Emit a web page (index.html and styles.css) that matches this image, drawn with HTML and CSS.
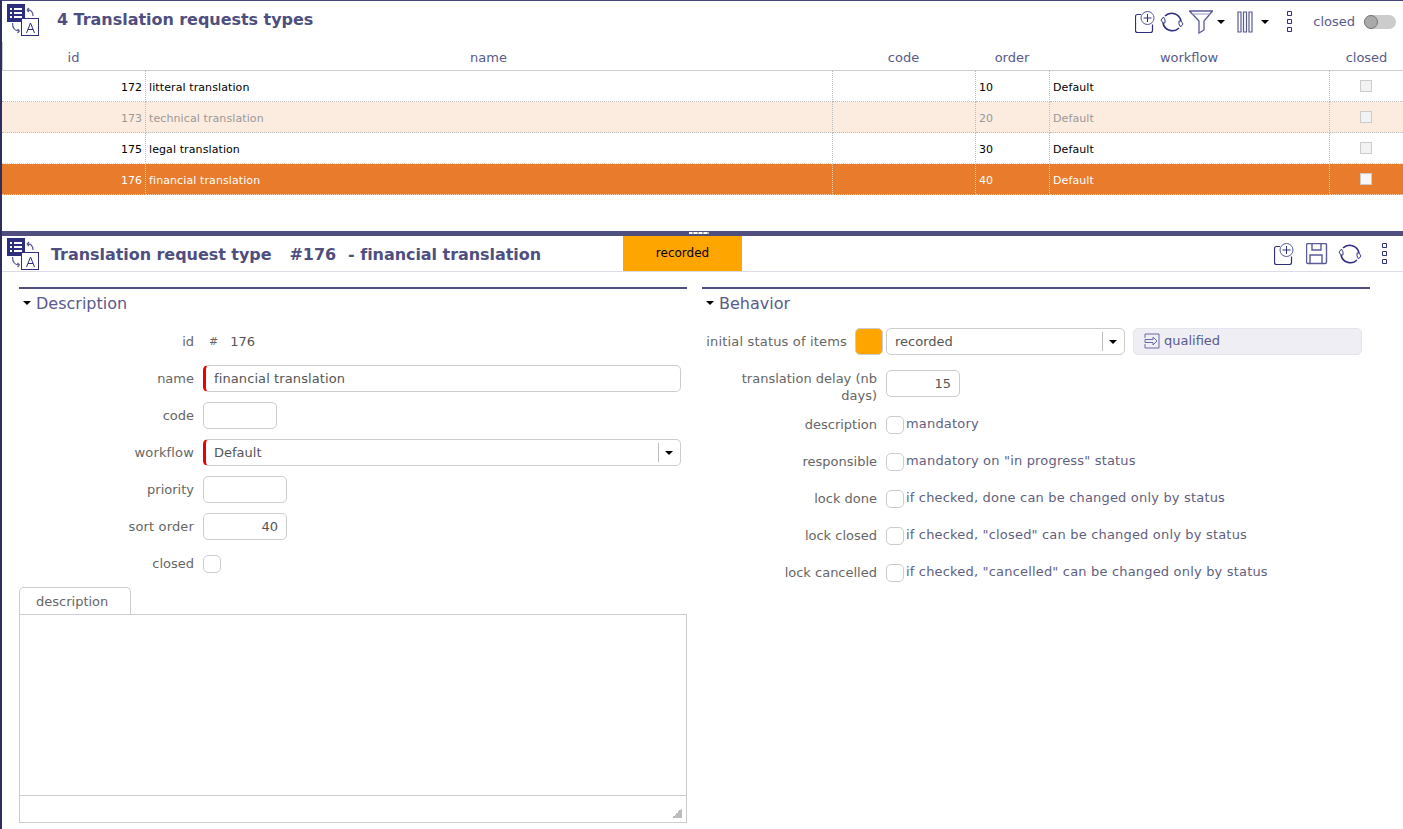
FILE: index.html
```html
<!DOCTYPE html>
<html lang="en">

<head>
  <meta charset="UTF-8" />
  <title>Translation requests types</title>
  <link rel="stylesheet" href="styles.css">
</head>

<body>
  <svg class="sprites" width="0" height="0">
    <symbol id="type-icon" viewBox="0 0 32 36">
      <rect x="0" y="0" width="18" height="18" fill="#2e2e7e" />
      <path d="M3 4h2v2h-2zM3 8h2v2h-2zM3 12h2v2h-2zM7 4h8v2h-8zM7 8h8v2h-8zM7 12h8v2h-8z" fill="#fff" />
      <rect x="14.500" y="14.500" width="17" height="17" fill="#fff" stroke="#2e2e7e" />
      <path d="M19.500 29l4-10 4 10M21 25.500h5" fill="none" stroke="#2e2e7e" />
      <path d="M20 6c3-.5 6 1 6 6M20 6l2-2M20 6l2 2M5.500 19c0 5 2 8 7 8M12.500 27l-2-2M12.500 27l-2 2" fill="none" stroke="#5a5a92" stroke-width="1.200" />
    </symbol>
    <symbol id="add-icon" viewBox="0 0 20 22">
      <path d="M6 3.500h-3.500a2 2 0 0 0-2 2v14a2 2 0 0 0 2 2h13a2 2 0 0 0 2-2v-6" fill="none" stroke="#2e2e7e" stroke-width="1.200" />
      <circle cx="12.500" cy="7" r="6.500" fill="#fff" stroke="#5a5a92" />
      <path d="M12.500 3v8M8.500 7h8" stroke="#2e2e7e" />
    </symbol>
    <symbol id="refresh-icon" viewBox="0 0 24 24">
      <path d="M5 6a9.500 9.500 0 0 1 16 5M19 18a9.500 9.500 0 0 1-16-5" fill="none" stroke="#2e2e7e" stroke-width="1.600" />
      <path d="M3 13l-2-3 2.500-3 1.500 3v3zM21 11l2 3-2.500 3-1.500-3v-3z" fill="#fff" stroke="#3a3a86" />
    </symbol>
    <symbol id="filter-icon" viewBox="0 0 24 24">
      <path d="M.500 1h23l-8.500 10v9l-5 3v-12z" fill="none" stroke="#5a5a9a" stroke-width="1.300" />
      <path d="M3 4h18" stroke="#9a9ac2" />
    </symbol>
    <symbol id="columns-icon" viewBox="0 0 16 22">
      <path d="M1 1h3v20h-3zM6.500 1h3v20h-3zM12 1h3v20h-3z" fill="none" stroke="#5a5a92" stroke-width="1.200" />
    </symbol>
    <symbol id="menu-icon" viewBox="0 0 6 21">
      <path d="M.500.500h4v4h-4zM.500 8.500h4v4h-4zM.500 16.500h4v4h-4z" fill="none" stroke="#2e2e7e" />
    </symbol>
    <symbol id="save-icon" viewBox="0 0 22 22">
      <rect x=".500" y=".500" width="20" height="20" rx="1.500" fill="none" stroke="#5a5a9a" stroke-width="1.400" />
      <path d="M6 1v6h9v-6M4 21v-9h12v9" fill="none" stroke="#5a5a9a" stroke-width="1.400" />
    </symbol>
    <symbol id="goto-icon" viewBox="0 0 16 16">
      <path d="M1 5v-4h14v14h-14v-4M1 6.500h8v-2.500l4 4-4 4v-2.500h-8z" fill="none" stroke="#6a6aa4" />
    </symbol>
  </svg>

  <div class="app">
    <!-- list part -->
    <div class="list-part">
      <div class="list-head">
        <svg class="type-icon"><use href="#type-icon" /></svg>
        <h1 class="list-title">4 Translation requests types</h1>
        <div class="tools">
          <svg class="tool tool-add"><use href="#add-icon" /></svg>
          <svg class="tool tool-refresh"><use href="#refresh-icon" /></svg>
          <svg class="tool tool-filter"><use href="#filter-icon" /></svg>
          <span class="caret caret-filter"></span>
          <svg class="tool tool-columns"><use href="#columns-icon" /></svg>
          <span class="caret caret-columns"></span>
          <svg class="tool tool-menu"><use href="#menu-icon" /></svg>
          <span class="closed-label">closed</span>
          <span class="switch"><span class="switch-knob"></span></span>
        </div>
      </div>

      <table class="grid">
        <colgroup>
          <col class="col-id" />
          <col class="col-name" />
          <col class="col-code" />
          <col class="col-order" />
          <col class="col-workflow" />
          <col class="col-closed" />
        </colgroup>
        <thead>
          <tr>
            <th>id</th>
            <th>name</th>
            <th>code</th>
            <th>order</th>
            <th>workflow</th>
            <th>closed</th>
          </tr>
        </thead>
        <tbody>
          <tr>
            <td class="num">172</td>
            <td>litteral translation</td>
            <td></td>
            <td>10</td>
            <td>Default</td>
            <td class="mid"><span class="grid-check"></span></td>
          </tr>
          <tr class="row-closed">
            <td class="num">173</td>
            <td>technical translation</td>
            <td></td>
            <td>20</td>
            <td>Default</td>
            <td class="mid"><span class="grid-check"></span></td>
          </tr>
          <tr class="row-before-selected">
            <td class="num">175</td>
            <td>legal translation</td>
            <td></td>
            <td>30</td>
            <td>Default</td>
            <td class="mid"><span class="grid-check"></span></td>
          </tr>
          <tr class="row-selected">
            <td class="num">176</td>
            <td>financial translation</td>
            <td></td>
            <td>40</td>
            <td>Default</td>
            <td class="mid"><span class="grid-check"></span></td>
          </tr>
        </tbody>
      </table>
    </div>

    <div class="splitter"><span class="splitter-grip"></span></div>

    <!-- detail part -->
    <div class="detail-head">
      <svg class="type-icon"><use href="#type-icon" /></svg>
      <h2 class="detail-title">Translation request type<span class="detail-id">#176</span><span class="detail-name">- financial translation</span></h2>
      <div class="status-badge">recorded</div>
      <div class="tools detail-tools">
        <svg class="tool tool-add"><use href="#add-icon" /></svg>
        <svg class="tool tool-save"><use href="#save-icon" /></svg>
        <svg class="tool tool-refresh"><use href="#refresh-icon" /></svg>
        <svg class="tool tool-menu"><use href="#menu-icon" /></svg>
      </div>
    </div>

    <div class="detail-body">
      <div class="pane pane-left">
        <div class="section-title"><span class="caret"></span>Description</div>

        <div class="field">
          <label class="field-label">id</label>
          <span class="hash">#</span><span class="field-text">176</span>
        </div>
        <div class="field">
          <label class="field-label">name</label>
          <div class="input input-required input-full input-name">financial translation</div>
        </div>
        <div class="field">
          <label class="field-label">code</label>
          <div class="input input-code"></div>
        </div>
        <div class="field">
          <label class="field-label label-loose">workflow</label>
          <div class="input input-required input-full input-select">Default<span class="select-arrow"><span class="caret"></span></span></div>
        </div>
        <div class="field">
          <label class="field-label">priority</label>
          <div class="input input-num"></div>
        </div>
        <div class="field">
          <label class="field-label label-loose">sort order</label>
          <div class="input input-num num">40</div>
        </div>
        <div class="field">
          <label class="field-label">closed</label>
          <span class="check"></span>
        </div>

        <div class="tab">description</div>
        <div class="editor">
          <div class="editor-area"></div>
          <div class="editor-foot"><span class="resize-mark"></span></div>
        </div>
      </div>

      <div class="pane pane-right">
        <div class="section-title"><span class="caret"></span>Behavior</div>

        <div class="field">
          <label class="field-label label-short">initial status of items</label>
          <span class="swatch"></span>
          <div class="input input-select input-status">recorded<span class="select-arrow"><span class="caret"></span></span></div>
          <div class="next-status"><svg class="goto-icon"><use href="#goto-icon" /></svg>qualified</div>
        </div>
        <div class="field field-tall">
          <label class="field-label">translation delay (nb days)</label>
          <div class="input input-delay num">15</div>
        </div>
        <div class="field">
          <label class="field-label">description</label>
          <span class="check"></span><span class="check-text">mandatory</span>
        </div>
        <div class="field">
          <label class="field-label">responsible</label>
          <span class="check"></span><span class="check-text">mandatory on "in progress" status</span>
        </div>
        <div class="field">
          <label class="field-label">lock done</label>
          <span class="check"></span><span class="check-text">if checked, done can be changed only by status</span>
        </div>
        <div class="field">
          <label class="field-label">lock closed</label>
          <span class="check"></span><span class="check-text">if checked, "closed" can be changed only by status</span>
        </div>
        <div class="field">
          <label class="field-label">lock cancelled</label>
          <span class="check"></span><span class="check-text">if checked, "cancelled" can be changed only by status</span>
        </div>
      </div>
    </div>
  </div>
</body>

</html>
```

FILE: styles.css
```css
* {
  box-sizing: border-box;
}

html,
body {
  margin: 0;
  padding: 0;
  height: 100%;
  overflow: hidden;
}

body {
  background-color: #fff;
  font-family: "DejaVu Sans", Verdana, sans-serif;
  font-size: 13px;
  color: #555;
}

.sprites {
  display: block;
  height: 0;
}

.app {
  height: 829px;
  border-top: 1px solid #45457c;
  border-left: 2px solid #2e2e5e;
}

/* list part */
.list-part {
  height: 230px;
}

.list-head {
  display: flex;
  align-items: flex-start;
  height: 41px;
}

.type-icon {
  flex: none;
  width: 32px;
  height: 36px;
  margin: 3px 0 0 5px;
}

.list-title {
  margin: 9px 0 0 18px;
  font-size: 16px;
  font-weight: bold;
  line-height: 20px;
  letter-spacing: -0.04px;
  color: #4f4f7f;
}

.tools {
  display: flex;
  align-items: center;
  margin-left: auto;
  height: 41px;
}

.tool {
  flex: none;
}

.tool-add {
  width: 20px;
  height: 22px;
}

.tool-refresh {
  width: 24px;
  height: 24px;
  margin-left: 5px;
}

.tool-filter {
  width: 24px;
  height: 24px;
  margin-left: 5px;
}

.tool-columns {
  width: 16px;
  height: 22px;
  margin-left: 12px;
}

.tool-menu {
  width: 6px;
  height: 21px;
  margin-left: 18px;
}

.tool-save {
  width: 22px;
  height: 22px;
  margin-left: 12px;
}

.caret {
  display: inline-block;
  width: 0;
  height: 0;
  border-left: 4px solid transparent;
  border-right: 4px solid transparent;
  border-top: 4px solid #000;
}

.caret-filter {
  margin-left: 4px;
}

.caret-columns {
  margin-left: 8px;
}

.closed-label {
  margin-left: 20px;
  color: #5a5a8a;
}

.switch {
  display: block;
  width: 32px;
  height: 14px;
  margin: 0 7px 0 9px;
  border-radius: 7px;
  background-color: #ccc;
}

.switch-knob {
  display: block;
  width: 14px;
  height: 14px;
  border-radius: 50%;
  background-color: #aaa;
  border: 1px solid #777;
}

/* grid */
.grid {
  width: 1401px;
  border-collapse: separate;
  border-spacing: 0;
  table-layout: fixed;
}

.col-id {
  width: 144px;
}

.col-name {
  width: 687px;
}

.col-code {
  width: 143px;
}

.col-order {
  width: 74px;
}

.col-workflow {
  width: 280px;
}

.col-closed {
  width: 73px;
}

.grid th {
  height: 29px;
  padding: 3px 2px 0 0;
  font-weight: normal;
  color: #5a5a8a;
  border-bottom: 1px solid #ccc;
}

.grid th:first-child {
  border-left: 1px solid #ccc;
}

.grid th:last-child {
  padding-right: 0;
}

.grid td {
  height: 31px;
  padding: 3px 3px 0;
  font-size: 11px;
  letter-spacing: 0.1px;
  color: #000;
  border-bottom: 1px dotted #bbb;
  border-right: 1px dotted #bbb;
}

.grid td:last-child {
  border-right: 0;
}

.grid td.num {
  text-align: right;
  letter-spacing: 0;
}

.grid td.mid {
  text-align: center;
}

.grid-check {
  display: inline-block;
  width: 12px;
  height: 12px;
  border: 1px solid #ccc;
  background-color: #f2f2f2;
  margin: 0 1px 3px 0;
  vertical-align: middle;
}

.row-closed td {
  background-color: #fcebdf;
  color: #999;
}

.row-before-selected td {
  border-bottom-color: #f2d0b4;
}

.row-selected td {
  background-color: #e97b2c;
  color: #fff;
  border-color: #f2d0b4;
}

.row-selected .grid-check {
  background-color: #f8f8f8;
}

/* splitter */
.splitter {
  display: flex;
  justify-content: center;
  height: 5px;
  background-color: #4f4f7f;
}

.splitter-grip {
  width: 20px;
  height: 2px;
  margin: 1px 7px 0 0;
  background: repeating-linear-gradient(90deg, #fff 0 3px, #bbb 3px 5px);
}

/* detail header */
.detail-head {
  display: flex;
  height: 36px;
  border-bottom: 1px solid #dcdce8;
}

.detail-head .type-icon {
  margin-top: 2px;
}

.detail-title {
  width: 572px;
  margin: 9px 0 0 12px;
  font-size: 16px;
  font-weight: bold;
  line-height: 20px;
  letter-spacing: -0.05px;
  color: #4f4f7f;
  white-space: nowrap;
}

.detail-id {
  margin-left: 18px;
}

.detail-name {
  margin-left: 12px;
}

.status-badge {
  width: 119px;
  height: 35px;
  line-height: 35px;
  font-size: 12px;
  text-align: center;
  color: #000;
  background-color: #ffa500;
}

.detail-tools {
  height: 35px;
  padding-right: 15px;
}

.detail-tools .tool-refresh {
  margin-left: 10px;
}

.detail-tools .tool-menu {
  margin-left: 20px;
}

/* form */
.detail-body {
  display: flex;
  padding: 15px 0 0 17px;
}

.pane {
  flex: none;
  width: 668px;
}

.pane-right {
  margin-left: 15px;
}

.section-title {
  height: 36px;
  border-top: 2px solid #4f4f7f;
  padding-top: 5px;
  font-size: 16px;
  line-height: 20px;
  color: #5a5a8a;
}

.section-title .caret {
  margin: 0 5px 3px 4px;
  vertical-align: middle;
}

.field {
  display: flex;
  align-items: center;
  height: 37px;
}

.field-tall {
  align-items: flex-start;
  height: 46px;
  padding-top: 10px;
}

.field-label {
  flex: none;
  width: 175px;
  margin-right: 9px;
  text-align: right;
  line-height: 17px;
  color: #666;
}

.label-loose {
  letter-spacing: 0.15px;
}

.label-short {
  width: 145px;
  margin-right: 8px;
  letter-spacing: 0.17px;
}

.input {
  position: relative;
  height: 27px;
  line-height: 25px;
  padding: 0 10px;
  border: 1px solid #ccc;
  border-radius: 5px;
  background-color: #fff;
  color: #555;
}

.input.num {
  text-align: right;
  padding-right: 8px;
}

.input-required {
  border-left: 3px solid #e00;
  padding-left: 8px;
}

.input-name {
  letter-spacing: 0.1px;
}

.input-full {
  width: 478px;
}

.input-code {
  width: 74px;
}

.input-num {
  width: 84px;
}

.input-status {
  width: 239px;
  padding-left: 8px;
}

.input-delay {
  width: 74px;
}

.select-arrow {
  position: absolute;
  right: 0;
  top: 3px;
  display: flex;
  align-items: center;
  justify-content: center;
  width: 22px;
  height: 19px;
  padding-right: 2px;
  border-left: 1px solid #bbb;
}

.hash {
  margin: 0 12px 0 6px;
  font-size: 11px;
  color: #666;
}

.field-text {
  color: #555;
}

.check {
  flex: none;
  width: 18px;
  height: 18px;
  border: 1px solid #ccc;
  border-radius: 5px;
  background-color: #fff;
}

.check-text {
  margin-left: 2px;
  padding-bottom: 2px;
  letter-spacing: 0.18px;
  color: #5f5f7f;
}

.swatch {
  flex: none;
  width: 28px;
  height: 27px;
  margin-right: 3px;
  border: 1px solid #ccc;
  border-radius: 5px;
  background-color: #ffa500;
}

.next-status {
  display: flex;
  align-items: center;
  width: 229px;
  height: 27px;
  margin-left: 8px;
  padding: 0 0 2px 10px;
  border: 1px solid #e4e4ec;
  border-radius: 5px;
  background-color: #eeeef4;
  color: #5a5a8a;
}

.goto-icon {
  width: 16px;
  height: 16px;
  margin-right: 4px;
}

/* description editor */
.tab {
  width: 112px;
  height: 27px;
  margin-top: 5px;
  padding-left: 16px;
  border: 1px solid #ccc;
  border-bottom: 0;
  border-radius: 5px 5px 0 0;
  line-height: 27px;
  color: #666;
}

.editor {
  height: 209px;
  border: 1px solid #ccc;
}

.editor-area {
  height: 181px;
  border-bottom: 1px solid #ccc;
}

.editor-foot {
  position: relative;
  height: 26px;
}

.resize-mark {
  position: absolute;
  right: 4px;
  bottom: 4px;
  width: 10px;
  height: 10px;
  background: linear-gradient(135deg, transparent 50%, #bbb 50%);
}
```
